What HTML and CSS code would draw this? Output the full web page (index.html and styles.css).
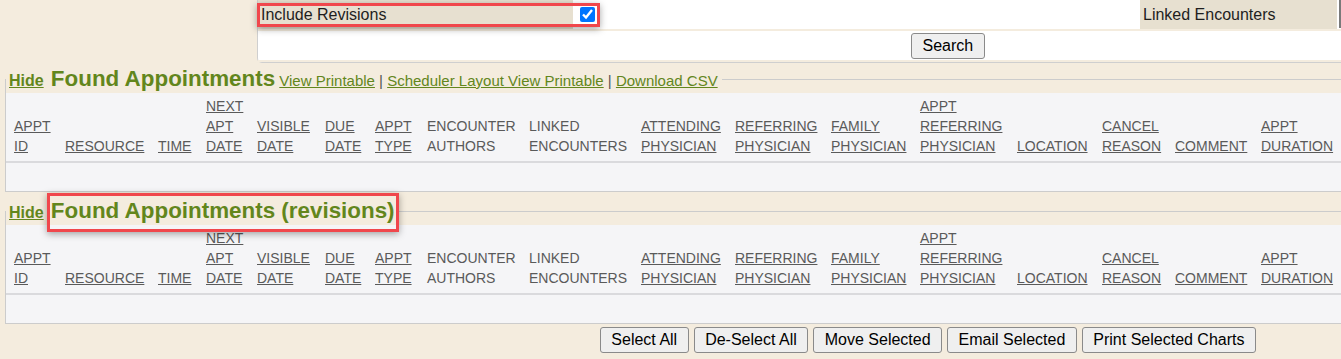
FILE: index.html
```html
<!DOCTYPE html>
<html lang="en">
<head>
    <meta charset="UTF-8">
    <title>Found Appointments</title>
    <link rel="stylesheet" href="styles.css">
</head>
<body>
    <div class="filters">
        <div class="filter-row">
            <div class="hl">
                <div class="cell-label">Include Revisions</div>
                <div class="cell-check"><input type="checkbox" checked></div>
            </div>
            <div class="cell-blank"></div>
            <div class="cell-label linked">Linked Encounters</div>
            <div class="cell-edge"></div>
        </div>
        <div class="filter-row">
            <button class="btn search-btn">Search</button>
        </div>
    </div>

    <fieldset class="results first">
        <legend><a href="#" class="hide-link">Hide</a> <span class="title">Found Appointments</span> <a href="#">View Printable</a> | <a href="#">Scheduler Layout View Printable</a> | <a href="#">Download CSV</a></legend>
        <table class="grid">
            <thead>
                <tr>
                    <th><a href="#">APPT ID</a></th>
                    <th><a href="#">RESOURCE</a></th>
                    <th><a href="#">TIME</a></th>
                    <th><a href="#">NEXT APT DATE</a></th>
                    <th><a href="#">VISIBLE DATE</a></th>
                    <th><a href="#">DUE DATE</a></th>
                    <th><a href="#">APPT TYPE</a></th>
                    <th>ENCOUNTER AUTHORS</th>
                    <th>LINKED ENCOUNTERS</th>
                    <th><a href="#">ATTENDING PHYSICIAN</a></th>
                    <th><a href="#">REFERRING PHYSICIAN</a></th>
                    <th><a href="#">FAMILY PHYSICIAN</a></th>
                    <th><a href="#">APPT REFERRING PHYSICIAN</a></th>
                    <th><a href="#">LOCATION</a></th>
                    <th><a href="#">CANCEL REASON</a></th>
                    <th><a href="#">COMMENT</a></th>
                    <th><a href="#">APPT DURATION</a></th>
                </tr>
            </thead>
            <tbody>
                <tr><td colspan="17"></td></tr>
            </tbody>
        </table>
    </fieldset>

    <fieldset class="results second">
        <legend><a href="#" class="hide-link">Hide</a> <span class="title mark">Found Appointments (revisions)</span></legend>
        <table class="grid">
            <thead>
                <tr>
                    <th><a href="#">APPT ID</a></th>
                    <th><a href="#">RESOURCE</a></th>
                    <th><a href="#">TIME</a></th>
                    <th><a href="#">NEXT APT DATE</a></th>
                    <th><a href="#">VISIBLE DATE</a></th>
                    <th><a href="#">DUE DATE</a></th>
                    <th><a href="#">APPT TYPE</a></th>
                    <th>ENCOUNTER AUTHORS</th>
                    <th>LINKED ENCOUNTERS</th>
                    <th><a href="#">ATTENDING PHYSICIAN</a></th>
                    <th><a href="#">REFERRING PHYSICIAN</a></th>
                    <th><a href="#">FAMILY PHYSICIAN</a></th>
                    <th><a href="#">APPT REFERRING PHYSICIAN</a></th>
                    <th><a href="#">LOCATION</a></th>
                    <th><a href="#">CANCEL REASON</a></th>
                    <th><a href="#">COMMENT</a></th>
                    <th><a href="#">APPT DURATION</a></th>
                </tr>
            </thead>
            <tbody>
                <tr><td colspan="17"></td></tr>
            </tbody>
        </table>
    </fieldset>

    <div class="actions">
        <button class="btn">Select All</button>
        <button class="btn">De-Select All</button>
        <button class="btn">Move Selected</button>
        <button class="btn">Email Selected</button>
        <button class="btn">Print Selected Charts</button>
    </div>
</body>
</html>
```

FILE: styles.css
```css
html, body {
    overflow: hidden;
}
body {
    margin: 0;
    background-color: #f4ecde;
    font-family: "Liberation Sans", Arial, sans-serif;
    font-size: 16px;
    color: #1e1e1e;
}

/* search filters box */
.filters {
    margin-left: 257px;
    width: 1100px;
    background-color: #fff;
    border-left: 1px solid #cfcfcf;
    border-bottom: 1px solid #cfcfcf;
    border-bottom-left-radius: 5px;
}
.filter-row {
    display: flex;
    align-items: stretch;
    height: 29px;
    border-bottom: 2px solid #f4ecde;
}
.filter-row:last-child {
    align-items: center;
}
.hl {
    position: relative;
    display: flex;
}
.hl::after {
    content: '';
    position: absolute;
    left: -1px;
    right: 0;
    top: 3px;
    bottom: 2px;
    border: 3px solid #f0474c;
    box-shadow: 0 2px 7px rgba(0, 0, 0, 0.35);
    pointer-events: none;
}
.cell-label {
    width: 312px;
    padding-left: 3px;
    line-height: 29px;
    background-color: #e7e0d0;
}
.cell-check {
    width: 27px;
    display: flex;
    align-items: center;
}
.cell-check input {
    width: 15px;
    height: 15px;
    margin: 0 0 0 7px;
}
.cell-blank {
    width: 540px;
}
.linked {
    width: 194px;
    margin-right: 2px;
}
.cell-edge {
    width: 10px;
    height: 27px;
    border-left: 2px solid #7a7a7a;
    border-top: 1px solid #7a7a7a;
}
.search-btn {
    margin-left: 653px;
    height: 26px;
}

/* buttons */
.btn {
    font-family: "Liberation Sans", Arial, sans-serif;
    font-size: 16px;
    line-height: 18px;
    padding: 3px 10.5px;
    color: #000;
    background-color: #efefef;
    border: 1px solid #8a8a8a;
    border-radius: 3px;
}

/* result sections */
.results {
    margin: 3px -1px 0 5px;
    padding: 1px 0 0 0;
    border: 1px solid #cccccc;
}
.results.second {
    margin-top: 6px;
}
legend {
    padding: 0 4px 0 3px;
    font-size: 15px;
    color: #555;
}
legend a {
    color: #62861c;
}
.hide-link {
    font-size: 16px;
    font-weight: 700;
}
.title {
    margin-left: 3px;
    font-size: 22.4px;
    font-weight: 700;
    color: #62861c;
}
.mark {
    position: relative;
}
.mark::after {
    content: '';
    position: absolute;
    left: -4px;
    right: -4px;
    top: -5px;
    bottom: -9px;
    border: 3px solid #f0474c;
    box-shadow: 0 2px 7px rgba(0, 0, 0, 0.35);
}

.grid {
    width: 100%;
    table-layout: fixed;
    border-collapse: collapse;
    background-color: #f5f5f7;
}
.grid th {
    box-sizing: border-box;
    padding: 3px 8px 5px 8px;
    vertical-align: bottom;
    text-align: left;
    font-size: 14px;
    font-weight: 400;
    line-height: 20px;
    color: #5a5a5a;
    border-bottom: 2px solid #dadadd;
}
.grid th a {
    color: #5a5a5a;
}
.grid th:nth-child(1) { width: 51px; }
.grid th:nth-child(2) { width: 93px; }
.grid th:nth-child(3) { width: 48px; }
.grid th:nth-child(4) { width: 51px; }
.grid th:nth-child(5) { width: 68px; }
.grid th:nth-child(6) { width: 50px; }
.grid th:nth-child(7) { width: 52px; }
.grid th:nth-child(8) { width: 102px; }
.grid th:nth-child(9) { width: 112px; }
.grid th:nth-child(10) { width: 94px; }
.grid th:nth-child(11) { width: 96px; }
.grid th:nth-child(12) { width: 89px; }
.grid th:nth-child(13) { width: 97px; }
.grid th:nth-child(14) { width: 85px; }
.grid th:nth-child(15) { width: 73px; }
.grid th:nth-child(16) { width: 86px; }
.grid th:nth-child(17) { width: 88px; }
.grid td {
    height: 28px;
    padding: 0;
}

.actions {
    display: flex;
    justify-content: flex-end;
    gap: 5px;
    margin-top: 3px;
    padding-right: 85px;
}
```
